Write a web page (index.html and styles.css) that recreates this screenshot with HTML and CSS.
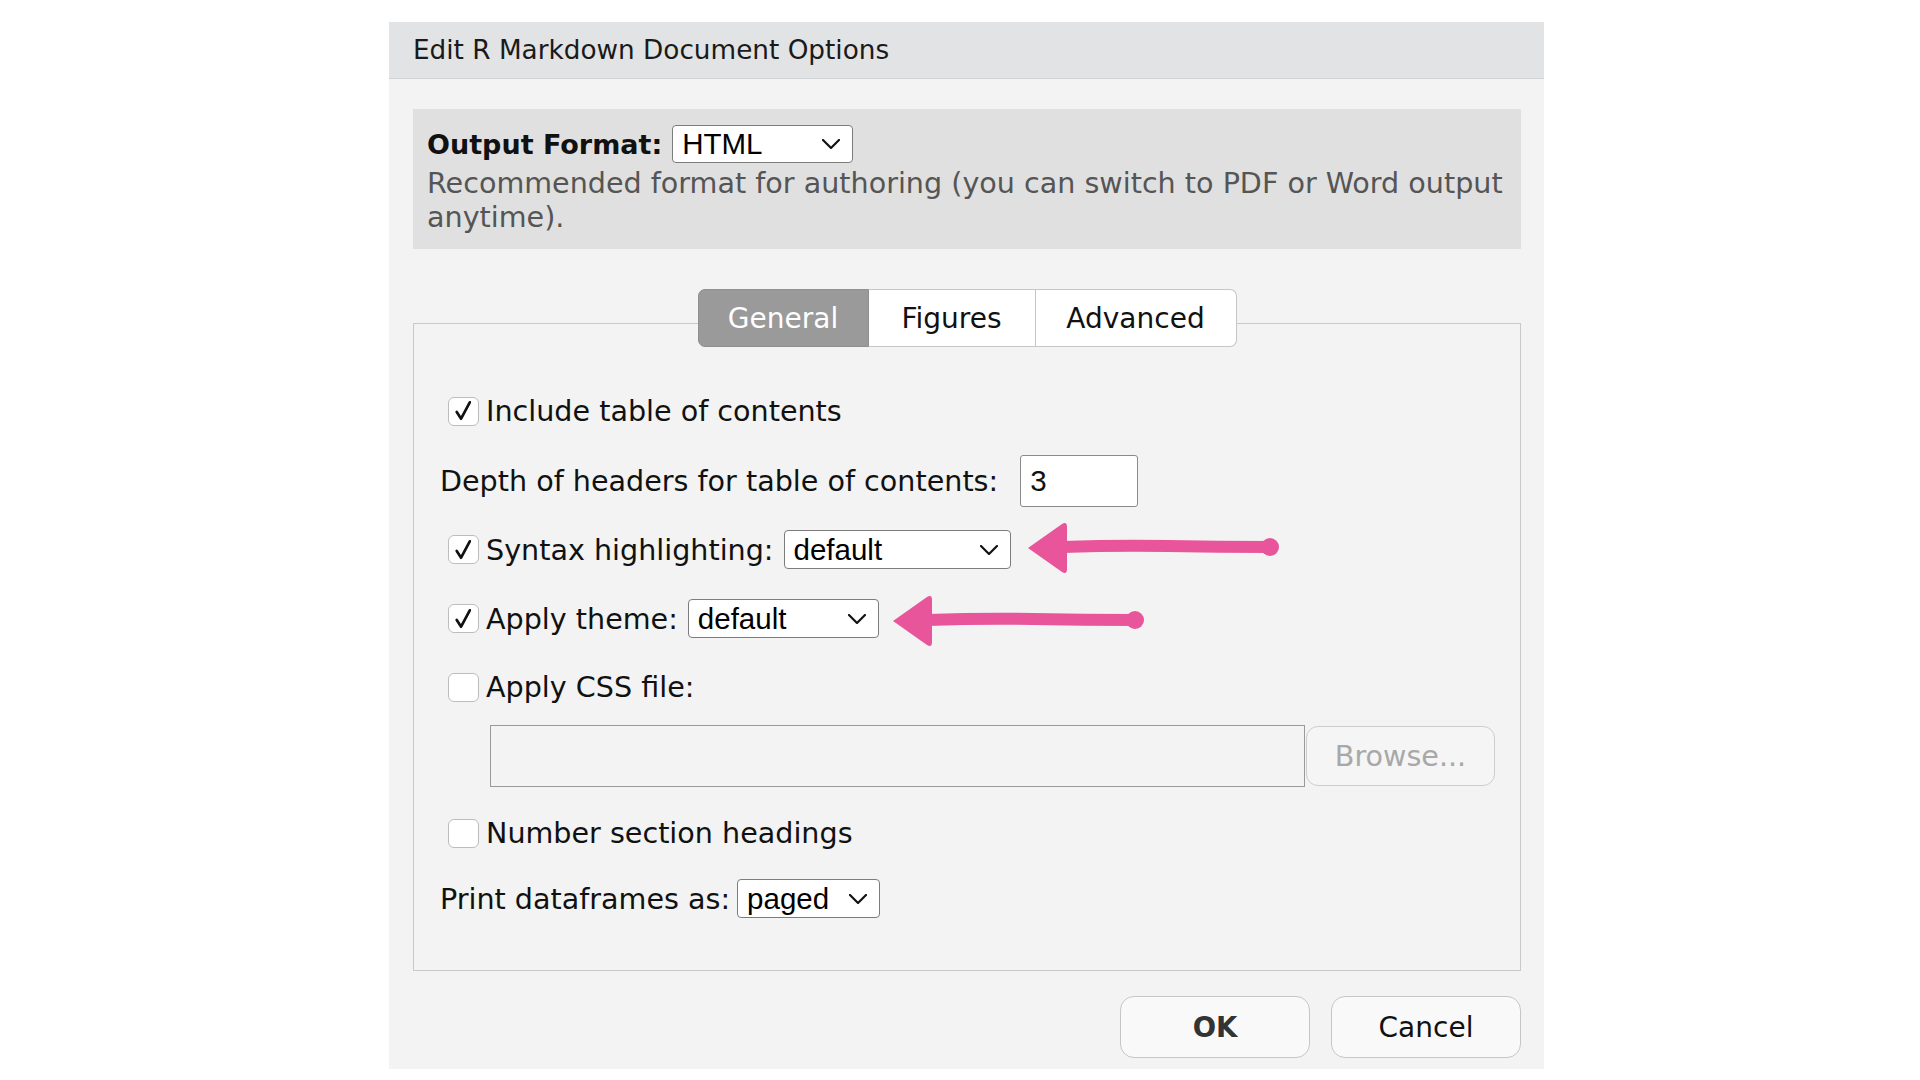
FILE: index.html
```html
<!DOCTYPE html>
<html lang="en">
<head>
<meta charset="utf-8">
<title>Edit R Markdown Document Options</title>
<link rel="stylesheet" href="styles.css">
</head>
<body>
<div class="dialog">
  <div class="titlebar">Edit R Markdown Document Options</div>
  <div class="content">
    <div class="format-panel">
      <div class="format-row">
        <span class="format-label">Output Format:</span>
        <div class="select select-html"><span class="select-value">HTML</span><svg class="chev" viewBox="0 0 18 10"><polyline points="1,1 9,9 17,1"/></svg></div>
      </div>
      <p class="format-desc">Recommended format for authoring (you can switch to PDF or Word output<br>anytime).</p>
    </div>

    <div class="tabs">
      <div class="tab tab-general active">General</div>
      <div class="tab tab-figures">Figures</div>
      <div class="tab tab-advanced">Advanced</div>
    </div>

    <div class="group">
      <div class="row row-include">
        <span class="checkbox checked"><svg viewBox="0 0 30 28"><path d="M8 15 L12.5 22 L21.5 5"/></svg></span>
        <span class="label">Include table of contents</span>
      </div>
      <div class="row row-depth">
        <span class="label">Depth of headers for table of contents:</span>
        <div class="textbox textbox-depth">3</div>
      </div>
      <div class="row row-syntax">
        <span class="checkbox checked"><svg viewBox="0 0 30 28"><path d="M8 15 L12.5 22 L21.5 5"/></svg></span>
        <span class="label">Syntax highlighting:</span>
        <div class="select select-syntax"><span class="select-value">default</span><svg class="chev" viewBox="0 0 18 10"><polyline points="1,1 9,9 17,1"/></svg></div>
      </div>
      <div class="row row-theme">
        <span class="checkbox checked"><svg viewBox="0 0 30 28"><path d="M8 15 L12.5 22 L21.5 5"/></svg></span>
        <span class="label">Apply theme:</span>
        <div class="select select-theme"><span class="select-value">default</span><svg class="chev" viewBox="0 0 18 10"><polyline points="1,1 9,9 17,1"/></svg></div>
      </div>
      <div class="row row-css">
        <span class="checkbox"></span>
        <span class="label">Apply CSS file:</span>
      </div>
      <div class="row row-file">
        <div class="textbox textbox-file"></div>
        <button class="browse">Browse...</button>
      </div>
      <div class="row row-number">
        <span class="checkbox"></span>
        <span class="label">Number section headings</span>
      </div>
      <div class="row row-print">
        <span class="label">Print dataframes as:</span>
        <div class="select select-print"><span class="select-value">paged</span><svg class="chev" viewBox="0 0 18 10"><polyline points="1,1 9,9 17,1"/></svg></div>
      </div>
    </div>

    <div class="buttons">
      <button class="btn btn-ok">OK</button>
      <button class="btn btn-cancel">Cancel</button>
    </div>
  </div>

  <svg class="arrow arrow-1" viewBox="0 0 256 60"><path class="head" d="M2 28 L36 4 Q41 1 41 7 L41 49 Q41 55 36 52 Z"/><path class="shaft" d="M36 27 Q92 25 142 26 T244 27"/><circle cx="244" cy="27" r="9"/></svg>
  <svg class="arrow arrow-2" viewBox="0 0 256 60"><path class="head" d="M2 28 L36 4 Q41 1 41 7 L41 49 Q41 55 36 52 Z"/><path class="shaft" d="M36 27 Q92 25 142 26 T244 27"/><circle cx="244" cy="27" r="9"/></svg>
</div>
</body>
</html>
```

FILE: styles.css
```css
* { box-sizing: border-box; }

html, body {
  margin: 0;
  padding: 0;
  background: #ffffff;
}

body {
  font-family: "DejaVu Sans", "Noto Sans", sans-serif;
  font-size: 28.6px;
  color: #111;
}

.dialog {
  position: relative;
  margin: 22px 0 0 389px;
  width: 1155px;
  height: 1047px;
  background: #f2f3f2;
}

.titlebar {
  height: 57px;
  background: #e2e3e5;
  border-bottom: 1px solid #d2d3d5;
  padding-left: 24px;
  display: flex;
  align-items: center;
  font-size: 26.3px;
  color: #1a1a1a;
}

.content {
  padding: 0 23px 0 24px;
}

.format-panel {
  margin-top: 30px;
  height: 140px;
  background: #e0e0e0;
  padding: 16px 14px 0 14px;
}

.format-row {
  display: flex;
  align-items: center;
  height: 38px;
  gap: 10px;
}

.format-label {
  font-weight: bold;
  font-size: 27px;
}

.format-desc {
  margin: 3px 0 0 0;
  color: #555;
  line-height: 34px;
}

.select {
  display: flex;
  align-items: center;
  justify-content: space-between;
  background: #fff;
  border: 1px solid #7c7c7c;
  border-radius: 4px;
  padding: 0 12px 0 9px;
  font-family: "Liberation Sans", Arial, sans-serif;
  font-size: 29.5px;
  color: #000;
}

.select-html { width: 181px; height: 38px; }
.select-syntax { width: 227px; height: 39px; }
.select-theme { width: 191px; height: 39px; }
.select-print { width: 143px; height: 39px; }

.chev {
  width: 18px;
  height: 10px;
  flex: none;
}
.chev polyline {
  fill: none;
  stroke: #111;
  stroke-width: 2.2;
  stroke-linecap: round;
  stroke-linejoin: round;
}

.tabs {
  position: relative;
  z-index: 1;
  margin-top: 40px;
  display: flex;
  justify-content: center;
  font-size: 28px;
}

.tab {
  height: 58px;
  display: flex;
  align-items: center;
  justify-content: center;
  background: #fff;
  border: 1px solid #c6c6c6;
  border-left: none;
  color: #111;
}
.tab-general {
  width: 171px;
  border-left: 1px solid #b0b0b0;
  border-radius: 7px 0 0 7px;
  background: #9a9a9a;
  border-color: #8f8f8f;
  color: #fff;
}
.tab-figures { width: 167px; }
.tab-advanced { width: 201px; border-radius: 0 7px 7px 0; }

.group {
  margin-top: -24px;
  height: 648px;
  border: 1px solid #c9c9c9;
  padding: 67px 20px 0 26px;
}

.row {
  display: flex;
  align-items: center;
}

.checkbox {
  flex: none;
  width: 31px;
  height: 29px;
  margin-left: 8px;
  margin-right: 7px;
  background: #fff;
  border: 1px solid #bdbdbd;
  border-radius: 6px;
  display: flex;
  align-items: center;
  justify-content: center;
}
.checkbox svg {
  width: 30px;
  height: 28px;
}
.checkbox svg path {
  fill: none;
  stroke: #111;
  stroke-width: 2.8;
  stroke-linecap: round;
  stroke-linejoin: round;
}

.row-include { height: 40px; }
.row-depth { margin-top: 24px; height: 52px; gap: 22px; }
.row-syntax { margin-top: 23px; height: 39px; }
.row-theme { margin-top: 30px; height: 39px; }
.row-css { margin-top: 29px; height: 40px; }
.row-file { margin-top: 18px; height: 62px; padding-left: 50px; }
.row-number { margin-top: 26px; height: 40px; }
.row-print { margin-top: 26px; height: 39px; }

.row-syntax .label, .row-theme .label { margin-right: 10px; }
.row-print .label { margin-right: 7px; }

.textbox {
  background: #fff;
  border: 1px solid #8a8a8a;
}
.textbox-depth {
  width: 118px;
  height: 52px;
  border-radius: 3px;
  display: flex;
  align-items: center;
  padding-left: 9px;
  font-family: "Liberation Sans", Arial, sans-serif;
  font-size: 29.5px;
}
.textbox-file {
  width: 815px;
  height: 62px;
  background: #f2f3f2;
  border-color: #9a9a9a;
}

.browse {
  width: 189px;
  height: 60px;
  margin-left: 1px;
  border: 1px solid #cdcdcd;
  border-radius: 12px;
  background: #f5f5f5;
  color: #a8a8a8;
  font: inherit;
}

.buttons {
  margin-top: 25px;
  display: flex;
  justify-content: flex-end;
  gap: 21px;
}

.btn {
  width: 190px;
  height: 62px;
  border: 1px solid #c6c6c6;
  border-radius: 14px;
  background: #f9f9f9;
  color: #111;
  font: inherit;
  font-size: 28px;
}
.btn-ok { font-weight: bold; color: #333; font-size: 27.5px; }

.arrow {
  position: absolute;
  width: 256px;
  height: 60px;
}
.arrow-1 { left: 637px; top: 498px; }
.arrow-2 { left: 502px; top: 571px; }
.arrow .head, .arrow circle { fill: #e9559a; }
.arrow .shaft {
  fill: none;
  stroke: #e9559a;
  stroke-width: 12;
  stroke-linecap: round;
}
```
